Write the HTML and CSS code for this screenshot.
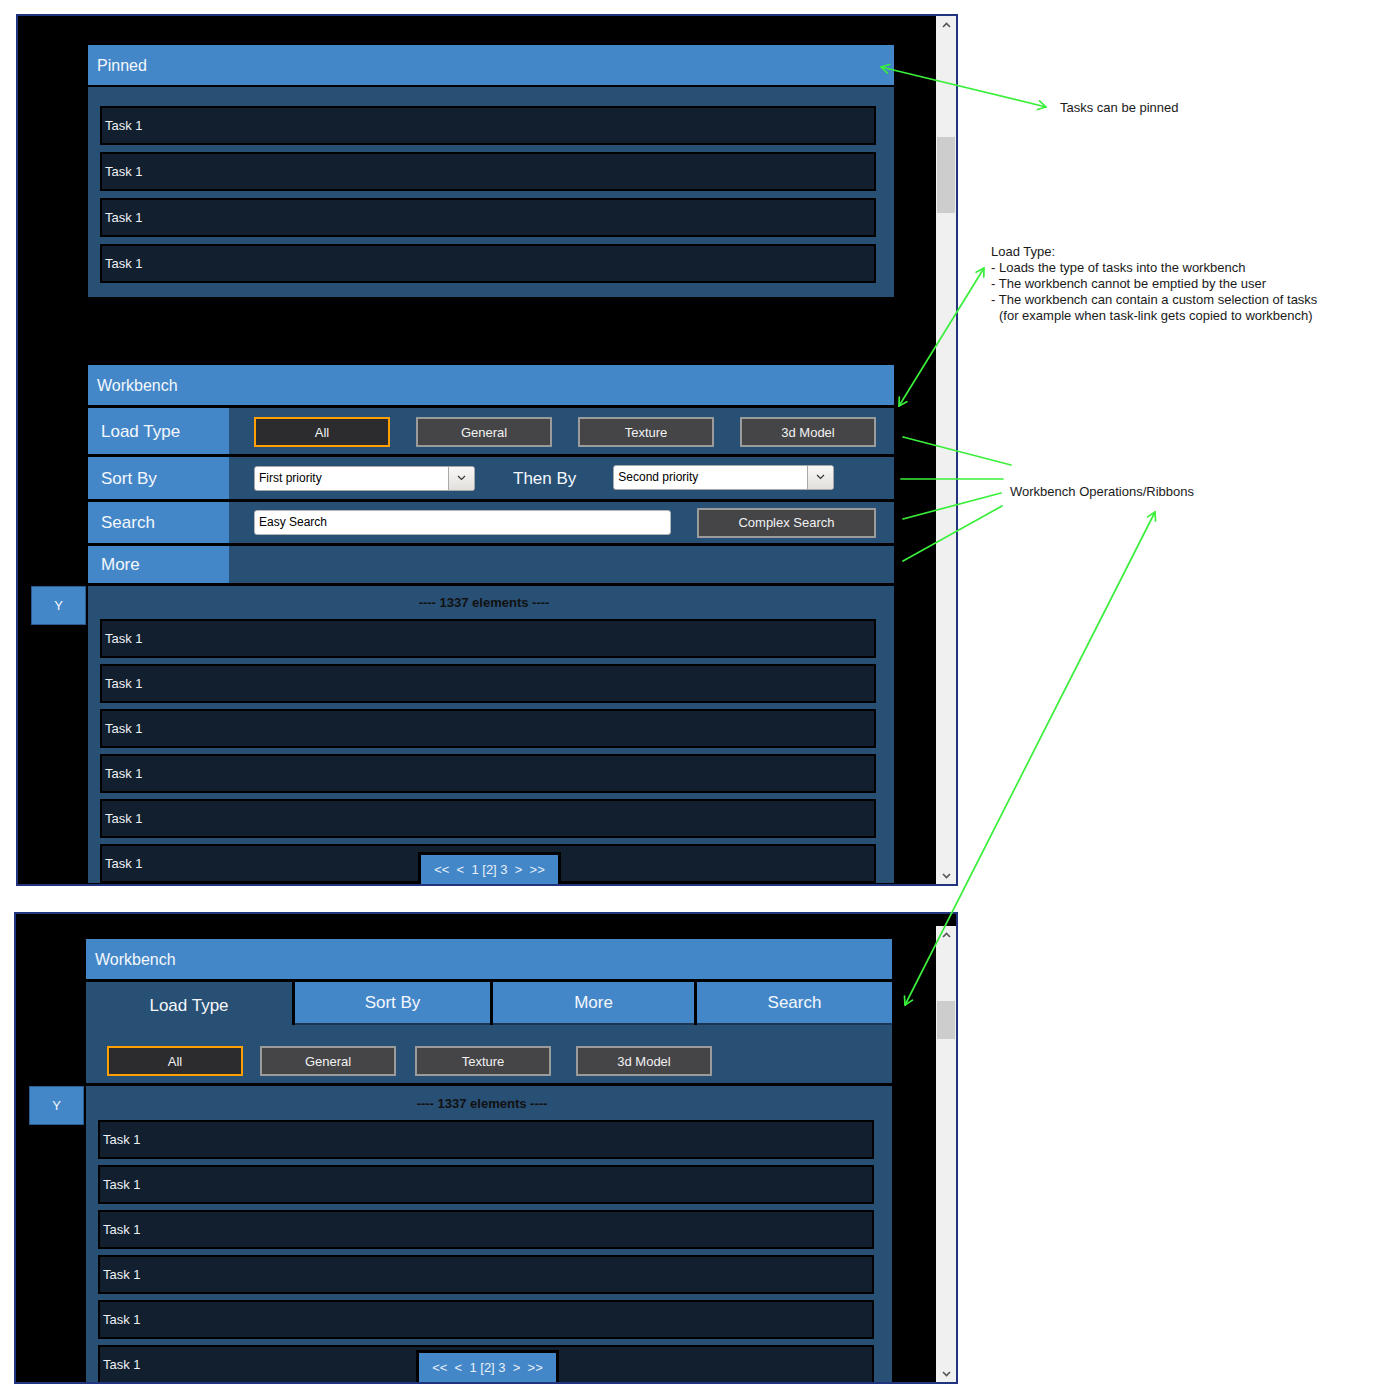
FILE: index.html
```html
<!DOCTYPE html>
<html lang="en">
<head>
<meta charset="utf-8">
<title>Workbench mockup</title>
<link rel="stylesheet" href="styles.css">
</head>
<body>
<div class="page">

  <!-- Frame A: ribbon layout -->
  <div class="frame frame-a">
    <div class="viewport">
      <div class="content">
        <section class="main-col pinned">
          <div class="panel-head">Pinned</div>
          <div class="pinned-body">
            <div class="task">Task 1</div>
            <div class="task">Task 1</div>
            <div class="task">Task 1</div>
            <div class="task">Task 1</div>
          </div>
        </section>

        <section class="main-col workbench">
          <div class="panel-head">Workbench</div>
          <div class="ribbon ribbon-load">
            <div class="ribbon-label">Load Type</div>
            <div class="ribbon-body spread">
              <div class="btn btn-active">All</div>
              <div class="btn">General</div>
              <div class="btn">Texture</div>
              <div class="btn">3d Model</div>
            </div>
          </div>
          <div class="ribbon ribbon-sort">
            <div class="ribbon-label">Sort By</div>
            <div class="ribbon-body">
              <div class="select"><span class="select-text">First priority</span><span class="select-btn"><svg width="9" height="6" viewBox="0 0 9 6"><polyline points="1,1 4.5,4.5 8,1" fill="none" stroke="#333" stroke-width="1.2"/></svg></span></div>
              <div class="then-by">Then By</div>
              <div class="select select-2"><span class="select-text">Second priority</span><span class="select-btn"><svg width="9" height="6" viewBox="0 0 9 6"><polyline points="1,1 4.5,4.5 8,1" fill="none" stroke="#333" stroke-width="1.2"/></svg></span></div>
            </div>
          </div>
          <div class="ribbon ribbon-search">
            <div class="ribbon-label">Search</div>
            <div class="ribbon-body">
              <div class="textbox">Easy Search</div>
              <div class="btn btn-wide">Complex Search</div>
            </div>
          </div>
          <div class="ribbon ribbon-more">
            <div class="ribbon-label">More</div>
            <div class="ribbon-body"></div>
          </div>
        </section>

        <div class="side-col ybtn ybtn-a">Y</div>
        <section class="main-col list list-a">
          <div class="count">---- 1337 elements ----</div>
          <div class="rows">
            <div class="task">Task 1</div>
            <div class="task">Task 1</div>
            <div class="task">Task 1</div>
            <div class="task">Task 1</div>
            <div class="task">Task 1</div>
            <div class="task">Task 1</div>
          </div>
        </section>
      </div>
      <div class="pager">&lt;&lt;&nbsp; &lt;&nbsp; 1 [2] 3&nbsp; &gt;&nbsp; &gt;&gt;</div>
    </div>
    <div class="scrollbar">
      <div class="sb-arrow"><svg width="9" height="6" viewBox="0 0 9 6"><polyline points="1,5 4.5,1.5 8,5" fill="none" stroke="#555" stroke-width="1.6"/></svg></div>
      <div class="sb-track"><div class="sb-thumb thumb-a"></div></div>
      <div class="sb-arrow"><svg width="9" height="6" viewBox="0 0 9 6"><polyline points="1,1 4.5,4.5 8,1" fill="none" stroke="#555" stroke-width="1.6"/></svg></div>
    </div>
  </div>

  <!-- Frame B: tab layout -->
  <div class="frame frame-b">
    <div class="viewport">
      <div class="content">
        <section class="main-col workbench-b">
          <div class="panel-head">Workbench</div>
          <div class="tabs">
            <div class="tab tab-active t1">Load Type</div>
            <div class="tab t2">Sort By</div>
            <div class="tab t3">More</div>
            <div class="tab t4">Search</div>
          </div>
          <div class="tab-body">
            <div class="btn btn-active">All</div>
            <div class="btn b2">General</div>
            <div class="btn b3">Texture</div>
            <div class="btn b4">3d Model</div>
          </div>
        </section>

        <div class="side-col ybtn ybtn-b">Y</div>
        <section class="main-col list list-b">
          <div class="count">---- 1337 elements ----</div>
          <div class="rows">
            <div class="task">Task 1</div>
            <div class="task">Task 1</div>
            <div class="task">Task 1</div>
            <div class="task">Task 1</div>
            <div class="task">Task 1</div>
            <div class="task">Task 1</div>
          </div>
        </section>
      </div>
      <div class="pager">&lt;&lt;&nbsp; &lt;&nbsp; 1 [2] 3&nbsp; &gt;&nbsp; &gt;&gt;</div>
    </div>
    <div class="scrollbar scrollbar-b">
      <div class="sb-arrow"><svg width="9" height="6" viewBox="0 0 9 6"><polyline points="1,5 4.5,1.5 8,5" fill="none" stroke="#555" stroke-width="1.6"/></svg></div>
      <div class="sb-track"><div class="sb-thumb thumb-b"></div></div>
      <div class="sb-arrow"><svg width="9" height="6" viewBox="0 0 9 6"><polyline points="1,1 4.5,4.5 8,1" fill="none" stroke="#555" stroke-width="1.6"/></svg></div>
    </div>
  </div>

  <!-- Annotations -->
  <div class="note note-pinned">Tasks can be pinned</div>
  <div class="note note-load">Load Type:<br>- Loads the type of tasks into the workbench<br>- The workbench cannot be emptied by the user<br>- The workbench can contain a custom selection of tasks<br><span class="indent">(for example when task-link gets copied to workbench)</span></div>
  <div class="note note-ribbons">Workbench Operations/Ribbons</div>

  <svg class="arrows" width="1400" height="1400" viewBox="0 0 1400 1400">
    <g fill="none" stroke="#3aef3a" stroke-width="1.7" stroke-linecap="round" stroke-linejoin="round">
      <path d="M881 67 L1046 107"/>
      <path d="M887.5 73.2 L881 67 L889.6 64.5"/>
      <path d="M1039.5 100.8 L1046 107 L1037.4 109.5"/>

      <path d="M984 268 L899 406"/>
      <path d="M976.1 272.3 L984 268 L983.8 277"/>
      <path d="M906.9 401.7 L899 406 L899.3 397"/>

      <path d="M1155 512 L905 1005"/>
      <path d="M1147.5 516.9 L1155 512 L1155.5 521"/>
      <path d="M912.5 1000.1 L905 1005 L904.5 996"/>

      <path d="M903 437 L1011 465"/>
      <path d="M901 479 L1003 479"/>
      <path d="M903 519 L1001 493"/>
      <path d="M903 561 L1002 506"/>
    </g>
  </svg>
</div>
</body>
</html>
```

FILE: styles.css
```css
* { box-sizing: border-box; }

html, body {
  margin: 0;
  padding: 0;
  background: #ffffff;
}

body {
  font-family: "Liberation Sans", Arial, sans-serif;
  color: #ffffff;
}

.page {
  position: relative;
  width: 1400px;
  height: 1400px;
  padding-top: 14px;
}

/* ---------- frames ---------- */
.frame {
  display: flex;
  border: 2px solid #21347f;
  background: #000000;
}

.frame-a {
  width: 942px;
  height: 872px;
  margin-left: 16px;
}

.frame-b {
  width: 944px;
  height: 472px;
  margin-left: 14px;
  margin-top: 26px;
}

.viewport {
  position: relative;
  flex: 1;
  overflow: hidden;
}

.content {
  display: grid;
  grid-template-columns: 70px 806px;
  align-items: start;
}

.frame-a .content { padding-top: 29px; }
.frame-b .content { padding-top: 25px; }

.main-col { grid-column: 2; }
.side-col { grid-column: 1; }

/* ---------- panels ---------- */
.panel-head {
  height: 40px;
  line-height: 41px;
  padding-left: 9px;
  background: #4487c9;
  font-size: 16px;
  color: #f4f8fc;
}

.pinned-body {
  margin-top: 2px;
  height: 210px;
  background: #284f74;
  padding: 19px 18px 14px 12px;
  display: flex;
  flex-direction: column;
  gap: 7px;
}

.task {
  flex: none;
  height: 39px;
  border: 2px solid #000000;
  background: #111f2e;
  padding-left: 3px;
  line-height: 35px;
  font-size: 13px;
  color: #eef2f6;
}

/* ---------- ribbons ---------- */
.workbench { margin-top: 68px; }

.ribbon {
  display: flex;
  margin-top: 3px;
}

.ribbon-load { height: 46px; }
.ribbon-sort { height: 42px; }
.ribbon-search { height: 41px; }
.ribbon-more { height: 37px; }

.ribbon-label {
  width: 141px;
  flex: none;
  background: #4487c9;
  display: flex;
  align-items: center;
  padding-left: 13px;
  padding-top: 1px;
  font-size: 17px;
  color: #f4f8fc;
}

.ribbon-body {
  flex: 1;
  background: #284f74;
  display: flex;
  align-items: center;
  padding-left: 25px;
}

.ribbon-body.spread {
  justify-content: space-between;
  padding-right: 18px;
  padding-top: 2px;
}

.btn {
  width: 136px;
  height: 30px;
  flex: none;
  border: 2px solid #9b9b9b;
  background: #454548;
  color: #f2f2f2;
  font-size: 13px;
  display: flex;
  align-items: center;
  justify-content: center;
}

.btn-active {
  border-color: #ffa000;
  background: #2c2c2e;
}

.btn-wide {
  width: 179px;
  margin-left: 26px;
}

.select {
  width: 221px;
  height: 25px;
  flex: none;
  display: flex;
  background: #ffffff;
  border: 1px solid #a8a8a8;
  border-radius: 3px;
  color: #000000;
  font-size: 12px;
}

.select-2 { margin-left: 37px; margin-top: -2px; }

.select-text {
  flex: 1;
  padding-left: 4px;
  line-height: 23px;
}

.select-btn {
  width: 26px;
  border-left: 1px solid #a8a8a8;
  border-radius: 0 2px 2px 0;
  background: linear-gradient(#f8f8f8, #e2e0dc);
  display: flex;
  align-items: center;
  justify-content: center;
}

.then-by {
  margin-left: 38px;
  font-size: 17px;
  color: #f4f8fc;
  padding-top: 2px;
}

.textbox {
  width: 417px;
  height: 25px;
  flex: none;
  background: #ffffff;
  border: 1px solid #b4b4b4;
  border-radius: 3px;
  color: #000000;
  font-size: 12px;
  line-height: 23px;
  padding-left: 4px;
}

/* ---------- list ---------- */
.list {
  margin-top: 3px;
  background: #284f74;
  padding: 8px 18px 0 12px;
}

.count {
  height: 17px;
  line-height: 17px;
  margin: 0 8px 8px 0;
  text-align: center;
  font-size: 13px;
  font-weight: bold;
  color: #111111;
}

.rows {
  display: flex;
  flex-direction: column;
  gap: 6px;
}

.ybtn {
  margin-top: 3px;
  justify-self: end;
  margin-right: 2px;
  width: 55px;
  height: 39px;
  background: #4487c9;
  border: 1px solid #2a5c8f;
  display: flex;
  align-items: center;
  justify-content: center;
  font-size: 13px;
  color: #f4f8fc;
}

.pager {
  position: absolute;
  left: 400px;
  bottom: 0;
  width: 143px;
  height: 32px;
  border: 3px solid #000000;
  border-bottom: none;
  background: #4487c9;
  color: #e8f0f8;
  font-size: 13px;
  line-height: 29px;
  text-align: center;
  white-space: nowrap;
}

/* ---------- tabs (frame B) ---------- */
.tabs {
  display: flex;
  gap: 3px;
  margin-top: 3px;
  background: #000000;
}

.tab {
  height: 43px;
  flex: none;
  background: #4487c9;
  border-bottom: 2px solid #1b3654;
  display: flex;
  align-items: center;
  justify-content: center;
  font-size: 17px;
  color: #f4f8fc;
}

.t1 { width: 206px; }
.t2 { width: 195px; }
.t3 { width: 201px; }
.t4 { flex: 1; }

.tab-active {
  background: #284f74;
  border-bottom: none;
  padding-top: 4px;
}

.tab-body {
  height: 58px;
  background: #284f74;
  display: flex;
  align-items: flex-start;
  padding: 21px 0 0 21px;
}

.tab-body .b2 { margin-left: 17px; }
.tab-body .b3 { margin-left: 19px; }
.tab-body .b4 { margin-left: 25px; }

.list-b { padding-top: 9px; }

/* ---------- scrollbar ---------- */
.scrollbar {
  width: 20px;
  flex: none;
  background: #f0f0f0;
  display: flex;
  flex-direction: column;
}

.scrollbar-b { margin-top: 12px; }

.sb-arrow {
  height: 17px;
  display: flex;
  align-items: center;
  justify-content: center;
}

.sb-track {
  flex: 1;
  padding: 0 1px;
}

.sb-thumb {
  background: #cdcdcd;
}

.thumb-a { margin-top: 104px; height: 76px; }
.thumb-b { margin-top: 58px; height: 38px; }

/* ---------- annotations ---------- */
.note {
  position: absolute;
  font-size: 13px;
  line-height: 16px;
  color: #1a1a1a;
  white-space: nowrap;
}

.note-pinned { left: 1060px; top: 100px; }
.note-load { left: 991px; top: 244px; }
.note-ribbons { left: 1010px; top: 484px; }

.indent { padding-left: 8px; }

.arrows {
  position: absolute;
  top: 0;
  left: 0;
  pointer-events: none;
  z-index: 5;
}
```
